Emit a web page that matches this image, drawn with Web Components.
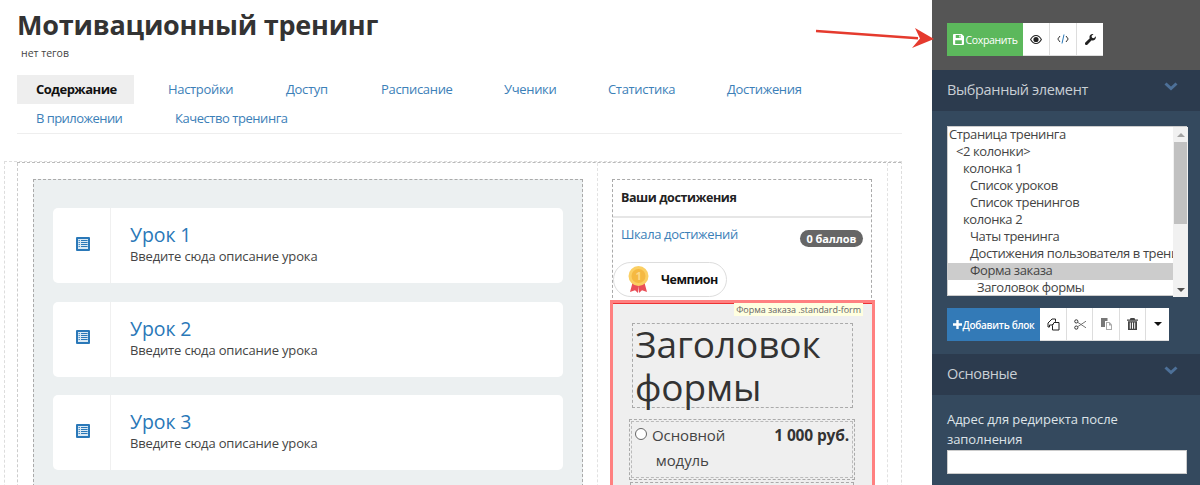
<!DOCTYPE html>
<html lang="ru">
<head>
<meta charset="utf-8">
<title>Мотивационный тренинг</title>
<style>
html,body{margin:0;padding:0;height:485px;overflow:hidden;background:#fff}
body{font-family:"Open Sans","Noto Sans","Liberation Sans",sans-serif;color:#333}
</style>
</head>
<body>
<editor-page>
  <training-main slot="main"></training-main>
  <editor-sidebar slot="side"></editor-sidebar>
</editor-page>
<script>
const def=(name,css,html)=>{
  customElements.define(name,class extends HTMLElement{
    connectedCallback(){
      if(this.shadowRoot)return;
      const r=this.attachShadow({mode:'open'});
      const h=typeof html==='function'?html(this):html;
      r.innerHTML=`<style>${css}</style>${h}`;
    }
  });
};
const ICONS={
 list:'<svg width="14" height="14" viewBox="0 0 14 14"><rect width="14" height="14" rx="1" fill="#2a78b8"/><rect x="2" y="2" width="10" height="10" fill="#dbe9f4"/><path d="M2.6 3.5h1.2M5 3.5h6.6M2.6 5.5h1.2M5 5.5h6.6M2.6 7.5h1.2M5 7.5h6.6M2.6 9.5h1.2M5 9.5h6.6" stroke="#2a78b8" stroke-width="1.1"/></svg>',
 save:'<svg width="11" height="11" viewBox="0 0 12 12"><path fill="#fff" fill-rule="evenodd" d="M1 0h8.5L12 2.5V11a1 1 0 0 1-1 1H1a1 1 0 0 1-1-1V1a1 1 0 0 1 1-1zm2 1.2V4.3h5.5V1.2zm3.9.4h1.2v2.2H6.9zM2.4 6.8v4h7.2v-4z"/></svg>',
 eye:'<svg width="12" height="9" viewBox="0 0 12 9"><path fill="#222" fill-rule="evenodd" d="M0 4.500C1.300 1.800 3.500 0 6 0s4.700 1.800 6 4.500C10.700 7.200 8.500 9 6 9S1.300 7.200 0 4.500zm1.200 0C2.300 6.500 4 7.900 6 7.900s3.700-1.400 4.800-3.400C9.700 2.500 8 1.100 6 1.100S2.300 2.500 1.200 4.500zM6 1.900a2.600 2.600 0 1 1 0 5.200 2.600 2.600 0 0 1 0-5.200z"/></svg>',
 code:'<svg width="12" height="10" viewBox="0 0 12 10"><path d="M3 2 .8 5 3 8M9 2l2.200 3L9 8" fill="none" stroke="#333" stroke-width="1"/><path d="M7 .5 5 9.500" stroke="#2a78b8" stroke-width="1"/></svg>',
 wrench:'<svg width="11" height="11" viewBox="0 0 12 12"><path fill="#222" d="M11.800 2.500 9.700 4.600 7.700 4 7.100 2.100 9.300.1C7.800-.3 6.300.2 5.500 1.300 4.800 2.300 4.700 3.500 5.200 4.600L.4 9.400a1.500 1.500 0 0 0 2.100 2.200l4.800-4.800c1.100.5 2.400.3 3.300-.5 1-.9 1.500-2.400 1.200-3.800z"/></svg>',
 copy:'<svg width="13" height="13" viewBox="0 0 13 13"><path fill="none" stroke="#222" stroke-width="1" d="M5 1h3.500v2.500L5 7H2.500v2H1V5z"/><path fill="none" stroke="#222" stroke-width="1" d="M7 4.500h5v7.500H5.500V7.500z"/></svg>',
 cut:'<svg width="12" height="11" viewBox="0 0 12 11"><circle cx="2.300" cy="2.400" r="1.600" fill="none" stroke="#333" stroke-width="1"/><circle cx="2.300" cy="8.600" r="1.600" fill="none" stroke="#333" stroke-width="1"/><path d="M3.700 3.300 12 8.800M3.700 7.700 12 2.200" stroke="#666" stroke-width=".9"/></svg>',
 paste:'<svg width="11" height="12" viewBox="0 0 11 12"><path fill="#777" d="M0 0h6.500v3H4v6H0z"/><path fill="#aaa" d="M5 4h3.500L11 6.500V12H5z"/><path fill="#fff" d="M6 5h2v2.500h2V11H6z"/></svg>',
 trash:'<svg width="11" height="12" viewBox="0 0 11 12"><path fill="#444" d="M3.500 0h4l.6 1.500H11v1.200H0V1.500h2.900z"/><path fill="#444" fill-rule="evenodd" d="M1 3.300h9V12H1zm1.800 1.200v6.200h1V4.500zm2.200 0v6.200h1V4.500zm2.200 0v6.200h1V4.500z"/></svg>',
 caret:'<svg width="8" height="4" viewBox="0 0 8 4"><path fill="#111" d="M0 0h8L4 4z"/></svg>'
};

def('editor-page',`
 :host{display:grid;grid-template-columns:932px 268px;width:1200px;height:485px;overflow:hidden;position:relative}
 .arrow{position:absolute;left:810px;top:22px;pointer-events:none}
`,`<slot name="main"></slot><slot name="side"></slot>
 <svg class="arrow" width="130" height="34" viewBox="0 0 130 34"><path d="M6 9 L108 16.200" stroke="#e53a2e" stroke-width="2.400" fill="none"/><path d="M124 17 L105 6 L110 16.500 L102 26 Z" fill="#e53a2e"/></svg>`);

def('training-main',`
 :host{display:flex;flex-direction:column;min-width:0;overflow:hidden;height:485px}
 .top{padding:0 30px 0 17px}
 h1{margin:7px 0 0;font:700 27px/36px "Open Sans",sans-serif;color:#333;letter-spacing:-.22px}
 .tags{margin:4px 0 0 4px;font-size:10.500px;line-height:13px;color:#444}
`,`<div class="top"><h1>Мотивационный тренинг</h1><div class="tags">нет тегов</div><training-tabs></training-tabs></div><training-canvas></training-canvas>`);

def('training-tabs',`
 :host{display:flex;flex-wrap:wrap;column-gap:15px;margin-top:15px;border-bottom:1px solid #eee;font-size:13px;line-height:29px}
 a{padding:0 19px;color:#3c80b8;text-decoration:none;letter-spacing:-.33px;white-space:nowrap}
 a.on{background:#eee;color:#111;font-weight:700;letter-spacing:-.5px}
 .brk{flex-basis:100%;height:0}
`,()=>`<a class="on" style="width:79px">Содержание</a><a style="width:65px">Настройки</a><a style="width:42px">Доступ</a><a style="width:70px">Расписание</a><a style="width:51px">Ученики</a><a style="width:66px">Статистика</a><a style="width:75px">Достижения</a><div class="brk"></div><a style="width:86px;letter-spacing:-.55px">В приложении</a><a style="width:115px;letter-spacing:-.45px">Качество тренинга</a>`);

def('training-canvas',`
 :host{display:block;margin:27px 30px 0 4px;border:1px dashed #ddd;border-bottom:0;flex:1}
 .row{display:grid;grid-template-columns:581px 290px;margin-left:12px;border-top:1px dashed #bbb;height:100%}
 .c1{border-left:1px dashed #ccc;padding:16px 14px 0 15px;border-right:1px dashed #e2e2e2}
 .c2{padding:16px 15px 0 14px;border-right:1px dashed #e2e2e2}
 .c1 .wrap{border:1px dashed #aaa;background:#ecf0f1;padding:28px 19px;display:flex;flex-direction:column;gap:18.500px;height:400px}
`,`<div class="row"><div class="c1"><div class="wrap">
 <lesson-card name="Урок 1"></lesson-card><lesson-card name="Урок 2"></lesson-card><lesson-card name="Урок 3"></lesson-card>
</div></div><div class="c2"><achievements-block></achievements-block><order-form></order-form></div></div>`);

def('lesson-card',`
 :host{display:grid;grid-template-columns:58px 1fr;height:75px;background:#fff;border-radius:5px;flex:none}
 .i{display:flex;align-items:center;justify-content:center;border-right:1px solid #f0f0f0;padding:0 0 4px 2px}
 .t{padding:13px 0 0 19px}
 .n{font-size:19.500px;line-height:27px;color:#2a78b8;letter-spacing:-.1px}
 .d{font-size:13px;line-height:17px;color:#444;letter-spacing:-.16px}
`,h=>`<div class="i">${ICONS.list}</div><div class="t"><div class="n">${h.getAttribute('name')}</div><div class="d">Введите сюда описание урока</div></div>`);

def('achievements-block',`
 :host{display:block;border:1px dashed #aaa;border-bottom:0;height:124px;box-sizing:border-box}
 .h{height:36px;border-bottom:2px solid #e6e6e6;padding-left:8px;font-weight:700;font-size:12.500px;line-height:35px;color:#222;letter-spacing:-.42px}
 .l{display:flex;justify-content:space-between;padding:8px 8px 0 8px}
 a{font-size:13px;line-height:17px;color:#3c80b8;letter-spacing:-.38px}
 .b{margin-top:4px;height:17px;width:63px;border-radius:9px;background:#666;color:#fff;font-size:11px;font-weight:700;line-height:17px;text-align:center;letter-spacing:-.1px}
 .p{display:flex;align-items:center;width:114px;height:35px;box-sizing:border-box;margin:15px 0 0 0;border:1px solid #ddd;border-radius:18px;font-size:12.500px;font-weight:700;color:#111;padding-left:14px;gap:12px;letter-spacing:-.5px}
`,()=>`<div class="h">Ваши достижения</div><div class="l"><a>Шкала достижений</a><span class="b">0 баллов</span></div>
<div class="p"><svg width="21" height="27" viewBox="0 0 21 27"><path d="M5 15 2 26 7 24.300 10 27 10.500 20 11 27 14 24.300 19 26 16 15z" fill="#ea4f58"/><circle cx="10.500" cy="10" r="10" fill="#fbcf63"/><circle cx="10.500" cy="10" r="7" fill="#f5b942"/><text x="10.500" y="14" font-size="11" fill="#fbd98a" text-anchor="middle" font-family="Open Sans">1</text></svg><span>Чемпион</span></div>`);

def('order-form',`
 :host{display:block;position:relative;background:#efefef;border-top:1px solid #e33;box-shadow:0 0 0 3px #ff8080;margin:0 0 0 1px;height:300px;padding:19px 18px 0 17px;box-sizing:border-box;width:259px}
 .tip{position:absolute;right:9px;top:-1px;background:#ffffe0;color:#666;font-size:9px;line-height:13px;padding:0 2px;white-space:nowrap;letter-spacing:-.05px}
 .head{border:1px dashed #aaa;height:85px;box-sizing:border-box;padding:0 2px;margin:0 1px 0 2px;font-size:37px;line-height:43px;color:#333;font-weight:400;letter-spacing:-.1px;overflow:visible}
 .head div{margin-top:-2px}
 .opt{margin:11px -1px 0 -1px;border:1px dashed #aaa;padding:1px;height:61px;box-sizing:border-box}
 .in{border:1px dashed #bbb;height:100%;box-sizing:border-box;display:grid;grid-template-columns:auto 1fr auto;font-size:15px;line-height:25px;color:#444;padding:1px 3px 0 3px}
 .r{width:10px;height:10px;border-radius:50%;border:1px solid #666;background:#fff;margin:5px 5px 0 0}
 .p{font-weight:700;color:#333;font-size:15.500px;white-space:nowrap;letter-spacing:-.15px}
 .n{letter-spacing:-.1px}
 .next{border:1px dashed #aaa;margin-top:2px;height:20px}
`,()=>`<div class="tip">Форма заказа .standard-form</div><div class="head"><div>Заголовок формы</div></div>
<div class="opt"><div class="in"><span class="r"></span><span class="n">Основной<br>&nbsp;модуль</span><span class="p">1 000 руб.</span></div></div><div class="next"></div>`);

def('editor-sidebar',`
 :host{display:block;background:#34495e;height:485px;overflow:hidden}
 .top{background:#555;height:70px;box-sizing:border-box;padding:23px 0 0 15px}
 .form{padding:15px 13px 0 15px;font-size:13px;line-height:19.500px;color:#dde3e8;letter-spacing:-.07px}
 .form .fld{height:24px;margin-top:1px;background:#fff;border:1px solid #ccc;box-sizing:border-box}
 .body{padding:15px 13px 13px 15px}
`,()=>`<div class="top"><tool-bar mode="save"></tool-bar></div>
<panel-head>Выбранный элемент</panel-head>
<div class="body"><element-tree></element-tree><tool-bar mode="add" style="margin-top:12px"></tool-bar></div>
<panel-head>Основные</panel-head>
<div class="form">Адрес для редиректа после заполнения<div class="fld"></div></div>`);

def('panel-head',`
 :host{display:flex;justify-content:space-between;align-items:center;height:41px;box-sizing:border-box;background:#2c3b4e;color:#c9cfd5;font-size:14.500px;padding:0 22px 2px 15px;letter-spacing:-.35px}
 svg{margin-top:-6px}
`,`<slot></slot><svg width="14" height="9" viewBox="0 0 14 9"><path d="M1.500 1.500 7 6.500l5.500-5" fill="none" stroke="#4d7098" stroke-width="3"/></svg>`);

def('tool-bar',`
 :host{display:flex;height:33px}
 .m{display:flex;align-items:center;justify-content:center;color:#fff;font-size:10.500px;white-space:nowrap;letter-spacing:-.35px;gap:2px}
 .s{width:76px;background:#5cb85c}
 .a{width:93px;background:#337ab7;font-weight:600;font-size:10px;letter-spacing:-.3px;gap:1px}
 .b{display:flex;align-items:center;justify-content:center;background:#fff;border-right:1px solid #ddd;border-bottom:1px solid #ddd;box-sizing:border-box;flex:none}
`,h=>h.getAttribute('mode')==='save'
 ?`<div class="m s">${ICONS.save}<span>Сохранить</span></div><div class="b" style="width:27px">${ICONS.eye}</div><div class="b" style="width:27px">${ICONS.code}</div><div class="b" style="width:26px;border-right:0">${ICONS.wrench}</div>`
 :`<div class="m a"><svg width="9" height="9" viewBox="0 0 9 9"><path d="M4.500 0v9M0 4.500h9" stroke="#fff" stroke-width="2.400"/></svg><span>Добавить блок</span></div><div class="b" style="width:27px">${ICONS.copy}</div><div class="b" style="width:26px">${ICONS.cut}</div><div class="b" style="width:27px">${ICONS.paste}</div><div class="b" style="width:26px">${ICONS.trash}</div><div class="b" style="width:23px;border-right:0">${ICONS.caret}</div>`);

def('element-tree',`
 :host{display:grid;grid-template-columns:225px 15px;width:240px;height:170px;box-sizing:border-box;background:#fff;border:1px solid #ccc}
 .l{overflow-x:clip;overflow-y:visible;font-size:13px;line-height:15px;color:#444;letter-spacing:-.4px;min-width:0}
 .l .in div{white-space:nowrap;height:17px;box-sizing:border-box}
 .sel{background:#ccc}
 .sb{background:#f1f1f1;display:flex;flex-direction:column;align-items:center;position:relative}
 .t{height:82px;width:13px;background:#c1c1c1;margin-top:15px}
 .u,.d{position:absolute;width:0;height:0;border-left:4px solid transparent;border-right:4px solid transparent}
 .u{top:6px;border-bottom:4px solid #a3a3a3}
 .d{bottom:5px;border-top:4px solid #505050}
`,()=>{
 const rows=[[0,'Страница тренинга'],[7,'<2 колонки>'],[14,'колонка 1'],[21,'Список уроков'],[21,'Список тренингов'],[14,'колонка 2'],[21,'Чаты тренинга'],[21,'Достижения пользователя в тренинге'],[21,'Форма заказа',1],[28,'Заголовок формы']];
 return `<div class="l"><div class="in">${rows.map(r=>`<div ${r[2]?'class="sel"':''} style="padding-left:${r[0]+1}px">${r[1].replace('<','&lt;')}</div>`).join('')}</div></div><div class="sb"><i class="u"></i><div class="t"></div><i class="d"></i></div>`;
});
</script>
</body>
</html>
